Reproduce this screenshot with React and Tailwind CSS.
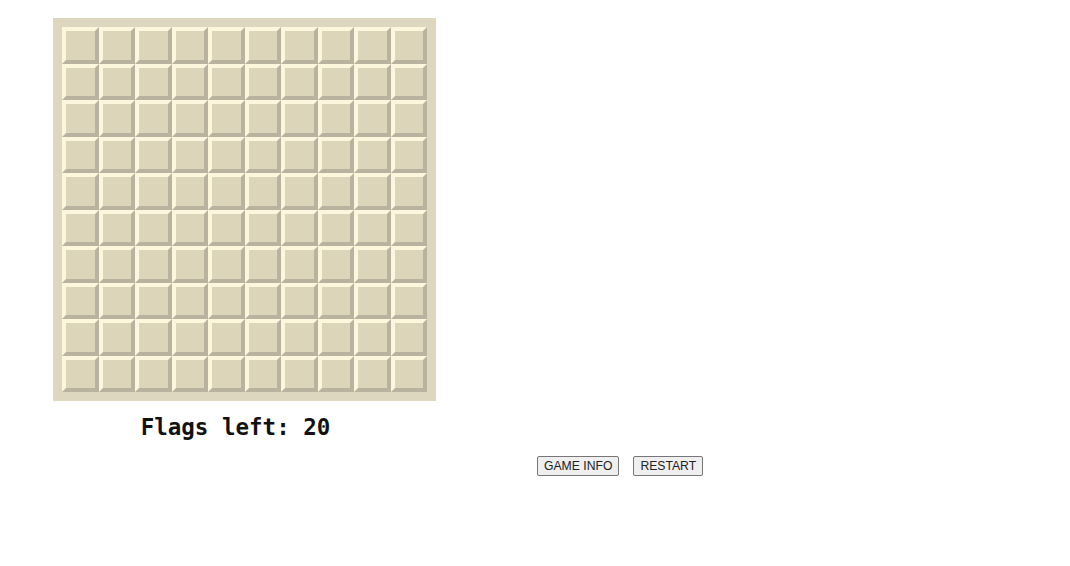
export default function App() {
  const cells = Array.from({ length: 100 });
  return (
    <div className="min-h-[566px] w-[1070px] bg-white pl-[53px] pt-[18px]">
      <div className="w-[383px] bg-[#ddd7bf] p-[9px]">
        <div className="grid grid-cols-10">
          {cells.map((_, i) => (
            <div
              key={i}
              className="box-border h-[36.5px] border-4 border-t-[#fcf6dc] border-l-[#fcf6dc] border-b-[#b8b29e] border-r-[#b8b29e] bg-[#dcd5ba]"
            />
          ))}
        </div>
      </div>
      <div
        className="mt-[10px] w-[365px] text-center text-[22.5px] font-bold text-[#111]"
        style={{ fontFamily: '"DejaVu Sans Mono", "Liberation Mono", monospace' }}
      >
        Flags left: 20
      </div>
      <div className="ml-[484px] mt-[11px] flex gap-[14px]" style={{ fontFamily: '"Liberation Sans", Arial, sans-serif' }}>
        <button className="h-[20px] rounded-[2px] border border-[#767676] bg-[#efefef] px-[6px] text-[12.2px] leading-none text-[#222]">
          GAME INFO
        </button>
        <button className="h-[20px] rounded-[2px] border border-[#767676] bg-[#efefef] px-[6px] text-[12.2px] leading-none text-[#222]">
          RESTART
        </button>
      </div>
    </div>
  );
}
